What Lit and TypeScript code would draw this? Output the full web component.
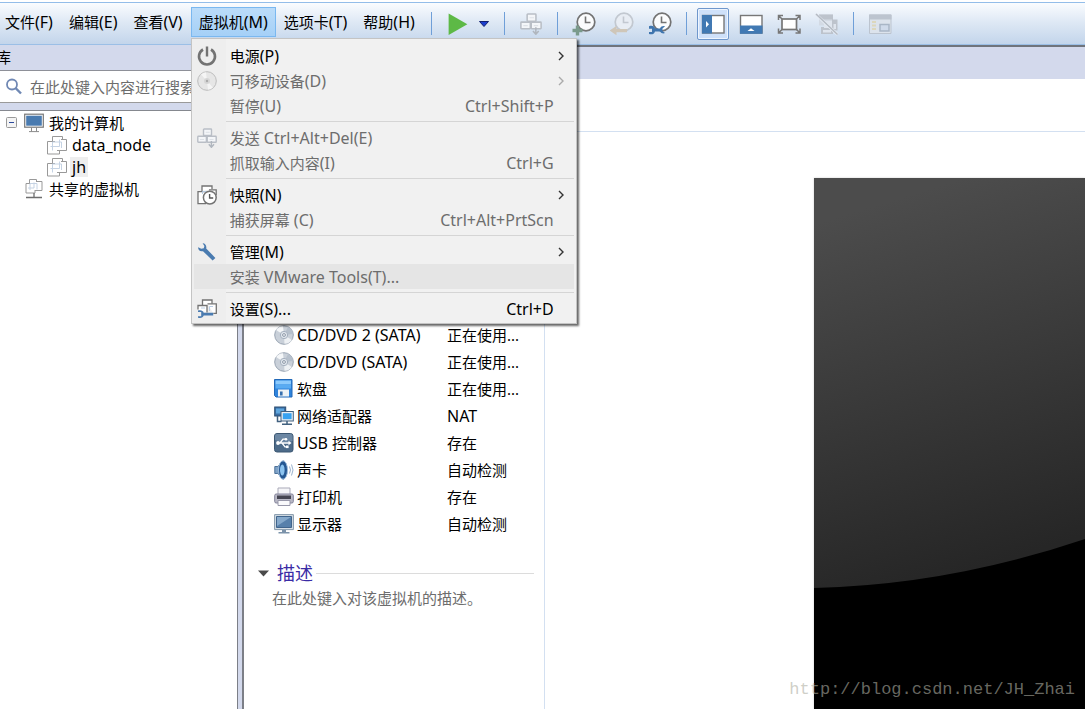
import { LitElement, html, css, svg, nothing, TemplateResult } from "lit";
import { customElement } from "lit/decorators.js";

const G = "#737373";

const art: Record<string, TemplateResult> = {
  power: svg`<path d="M6 3.5A8 8 0 1 0 14 3.5" fill="none" stroke="#737373" stroke-width="2.6"/><path d="M10 .5v10" stroke="#737373" stroke-width="2.4"/>`,
  discOff: svg`<circle cx="10" cy="10" r="9.3" fill="#e6e6e6" stroke="#bdbdbd"/><path d="M10 10 4 3.5A9 9 0 0 1 9 1.2zM10 10l6 6.5a9 9 0 0 1-5 2.3z" fill="#f5f5f5"/><circle cx="10" cy="10" r="3" fill="#d6d6d6"/><circle cx="10" cy="10" r="1.2" fill="#aaa"/>`,
  keys: svg`<g fill="#f4f6f9" stroke="#b9bec6" stroke-width="1.4"><rect x="6.5" y="1" width="8" height="6.5" rx=".6"/><rect x=".8" y="8.3" width="8.6" height="6" rx=".6"/><rect x="10.2" y="8.3" width="9" height="6" rx=".6"/></g><path d="M3 11.5h4M12.5 11.5h4M8.7 4.3h4" stroke="#dde1e7"/><path d="M14.4 13v6M11.8 16.3l2.6 3 2.6-3" fill="none" stroke="#b0b6be" stroke-width="1.4"/>`,
  snap: svg`<g fill="#fff" stroke="#737373" stroke-width="1.3"><path d="M5 6V1h10v3"/><path d="M8 6.7H1v12h8"/><path d="M12 4.8h7.2V10"/></g><path d="M5.5 9V6.5h4" stroke="#b9cde4" fill="none"/><circle cx="12.8" cy="12.6" r="6.4" fill="#fff" stroke="#737373" stroke-width="1.5"/><path d="M12.6 9v4h3.6" fill="none" stroke="#555" stroke-width="1.4"/>`,
  wrench: svg`<path d="M1.2 5.2C.8 7.600 2.700 10 6 9.200l9.600 9.200 2.800-2.500L9.200 6.600C9.900 3.500 8 1 5.600 1.200l1.800 2.800-.6 2.300-2.600.5z" fill="#4a7bb0"/>`,
  settings: svg`<g fill="#fff" stroke="#737373" stroke-width="1.3"><path d="M5.5 7V1h9.500v4"/><path d="M1 10.500V6.500h9v7"/><path d="M10.500 4.800h8.800v9.500h-3"/></g><path d="M4 9h4M12.500 12V7.500H16" stroke="#b9cde4" fill="none"/><path d="M1 11.500c3-.8 5.200.3 5.700 2.300h9.500v2.800H6.700c-.6 2-2.700 3-5.700 2.200v-1.500h3.200v-4.200H1z" fill="#4a7bb0"/>`,
  computer: svg`<rect x=".7" y="1.2" width="18.6" height="13" fill="#fff" stroke="#777" stroke-width="1.2"/><rect x="2.2" y="2.7" width="15.6" height="10" fill="#4a7bb0"/><path d="M7.5 14.5v4M12.5 14.5v4M5 18.6h10" stroke="#8a8a8a"/>`,
  vm: svg`<g fill="#fff" stroke="#999"><path d="M5.5 6.500V1.500h10V4.500"/><path d="M8 6.500H.5v12.500h12V15"/><path d="M14 4.500h5.500V15.500H10"/></g><path d="M5.500 15.500V7h9V13M3.500 11.500h9v-7" fill="none" stroke="#c5d3e4"/>`,
  shared: svg`<g fill="#fff" stroke="#999"><path d="M5.500 4.500V.5h7V3"/><path d="M7 4.500H2v9.500h9v-3"/><path d="M12 2.500h6v9h-7"/></g><path d="M6 11V4.500h7v6M4 9h6V3.500" fill="none" stroke="#c5d3e4"/><path d="M10 14v4M2 18.500h16" stroke="#6d6d6d" stroke-width="1.3"/>`,
  search: svg`<circle cx="8" cy="7.500" r="5" fill="none" stroke="#7088b4" stroke-width="1.800"/><path d="m11.500 11 5.500 5.500" stroke="#7088b4" stroke-width="2.400"/>`,
  play: svg`<path d="m1.500.5 17 9.800-17 9.700z" fill="#5db946"/>`,
  disc: svg`<circle cx="10" cy="10" r="9.300" fill="#c9d0d9" stroke="#9aa5b3"/><path d="M10 10 2 5A9 9 0 0 1 9 1.200z" fill="#f4f6f8"/><path d="m10 10 8 5a9 9 0 0 1-7.500 3.700z" fill="#eef1f4"/><path d="m10 10 4-8a9 9 0 0 1 5 7z" fill="#b6c0cc"/><circle cx="10" cy="10" r="3.700" fill="#dfe5ec" stroke="#a6b1bf"/><circle cx="10" cy="10" r="1.400" fill="#fff" stroke="#8995a5"/>`,
  floppy: svg`<path d="M.5.500h17.500v17.500H2L.5 16.500z" fill="#2f84dc" stroke="#2269b8"/><path d="M1.500 1.500h15.500v4h-15.500z" fill="#8ccafc"/><path d="M1.500 5.500h15.500v4h-15.500z" fill="#59abf2"/><path d="M4 10.500h11v7H4z" fill="#eef2f6"/><path d="M6 12.500h2.600v4H6z" fill="#376fae"/>`,
  network: svg`<rect x=".7" y="1" width="11" height="9" fill="#3a6ea5" stroke="#2d4f72"/><rect x="2" y="2.500" width="8" height="5" fill="#5fa6dd"/><rect x="7" y="5.500" width="12.300" height="9.500" fill="#e8eef3" stroke="#41617f"/><rect x="8.800" y="7.200" width="8.800" height="6" fill="#37a2f0"/><path d="M13 15v2.500M8 18.300h10M3.500 10v5.500h4" fill="none" stroke="#41617f" stroke-width="1.500"/>`,
  usb: svg`<rect x=".5" y=".5" width="18.500" height="18.500" rx="2.500" fill="#4d6b89" stroke="#3d5873"/><path d="M1 3a2 2 0 0 1 2-2h13.500a2 2 0 0 1 2 2v5Q10 11 1 7z" fill="#6c87a3"/><path d="M3 10h12M6 10l3-3.800h3M8 10l3 3.800h2" fill="none" stroke="#fff" stroke-width="1.300"/><path d="m14.500 7.800 3 2.200-3 2.200z" fill="#fff"/><circle cx="4" cy="10" r="1.900" fill="#fff"/><circle cx="12" cy="6.200" r="1.300" fill="#fff"/><path d="M12 12.500h2.600v2.600H12z" fill="#fff"/>`,
  sound: svg`<path d="M.8 6.500h3L9.500.8v18.400L3.800 13.500h-3z" fill="#7fa3c8" stroke="#4c7198"/><ellipse cx="9" cy="10" rx="4.500" ry="9.200" fill="#255893" stroke="#9dbbd9"/><ellipse cx="8.300" cy="10" rx="2.300" ry="5.500" fill="#8cc4f0"/><path d="M15.500 6.500q2 3.500 0 7M17.500 4.500q3 5.500 0 11" fill="none" stroke="#9ab3cf"/>`,
  printer: svg`<path d="M4 1h12v7H4z" fill="#f6f6f9" stroke="#a9a9b8"/><rect x=".7" y="7" width="18.600" height="9" rx="1.500" fill="#b9b9c6" stroke="#83839a"/><path d="M3 8.500h14v3.500H3z" fill="#454552"/><path d="M4 13.500h12v5H4z" fill="#fafafc" stroke="#9898aa"/>`,
  display: svg`<path d="M.6.6h18.800v15H.6z" fill="#d7dfe6" stroke="#8599ac"/><path d="M2.500 2.500h15v11h-15z" fill="#5780ab" stroke="#41658c"/><path d="M3 3h14L3 12z" fill="#86a9cb"/><path d="M8 16h4v2H8zM4.500 18h11v1.500h-11z" fill="#7c93aa"/>`,
};

const clock = (stroke: string, fill: string) =>
  svg`<circle cx="14" cy="10" r="8.800" fill=${fill} stroke=${stroke} stroke-width="1.700"/><path d="M13.500 4.500v6h5" fill="none" stroke=${stroke} stroke-width="1.600"/>`;

const tool: Record<string, TemplateResult> = {
  take: svg`${clock(G, "#fbfcfd")}<path d="M5.500 13.500v10M.5 18.500h10" stroke="#7a9a8c" stroke-width="3.400"/>`,
  revert: svg`${clock("#c2c8d0", "#e8edf4")}<path d="M-.5 18.500 6.500 14v3H17v3.200H6.500v3z" fill="#cfc6b8"/>`,
  manage: svg`${clock(G, "#fbfcfd")}<path d="M1 14.200c3.500-1 5.300.2 6 2.300h5c1-2 3-2.800 5-2.200l-2.500 2.200v2.600l2.500 2c-2 .8-4 0-5-1.700H7c-.8 2.500-3 3.500-6 2.500v-2h3v-3.200H1z" fill="#3f75ae"/>`,
  sidebar: svg`<rect x="1.500" y="3.500" width="21.500" height="17.500" fill="#fff" stroke="#777" stroke-width="1.400"/><path d="M1 3h10v18.500H1z" fill="#4179b3"/><path d="m5 9 3 3.300L5 15.500z" fill="#fff"/>`,
  thumbs: svg`<rect x="1.500" y="3.500" width="21.500" height="17.500" fill="#fff" stroke="#777" stroke-width="1.400"/><path d="M1 13.500h22.500v8.300H1z" fill="#4179b3"/><path d="m8.500 19 3.500-2.800 3.500 2.800z" fill="#fff"/>`,
  full: svg`<rect x="5" y="7" width="14.500" height="10.500" fill="#fff" stroke="#777" stroke-width="1.700"/><path d="M1.500 8V3.500H6M18.500 3.500H23V8M23 16.500V21h-4.500M6 21H1.500v-4.500M1.500 3.500 5 7M23 3.500 19.500 7M23 21l-3.500-3.500M1.500 21 5 17.500" fill="none" stroke="#777" stroke-width="1.500"/>`,
  unity: svg`<path d="M4 2.500h14v11H4z" fill="#d3dae4"/><path d="M4 2.500h14v5H4zM17 7.500h5.500v11H17zM6 15h12v7H6z" fill="#bdc3cc"/><path d="M9 9h8v7H9zM18.500 12h2.500v5h-2.500zM8 18h8v2.500H8z" fill="#dfe5ee"/><path d="m.5 2 22 20.500" stroke="#e6ecf4" stroke-width="3"/><path d="m1 2 21.500 20.500" stroke="#b4bac3" stroke-width="1.500"/>`,
  console: svg`<path d="M1.500 3h21.500v18.500H1.500z" fill="#dce3ec" stroke="#bcc4cf"/><path d="M1 2.500h22.500v5H1z" fill="#bcc4cf"/><path d="M4 10h4M4 13.500h4M4 17h4" stroke="#dcd7bc" stroke-width="2"/><path d="M12 12.500h9v6.500h-9z" fill="#cfdaea" stroke="#a9b6c6" stroke-width="1.500"/>`,
};

const icon = (name: string) => html`<svg class="icon" viewBox="0 0 20 20" aria-hidden="true">${art[name]}</svg>`;

/* Latin runs are set one size above the Chinese around them. */
const mixed = (text: string) =>
  text
    .split(/([\x20-\x7e]+)/)
    .filter(Boolean)
    .map((run) => (run.charCodeAt(0) < 128 ? html`<span class="latin">${run}</span>` : run));

interface Entry {
  label?: string;
  icon?: string;
  keys?: string;
  sub?: boolean;
  off?: boolean;
  hot?: boolean;
}

const entries: Entry[] = [
  { label: "电源(P)", icon: "power", sub: true },
  { label: "可移动设备(D)", icon: "discOff", sub: true, off: true },
  { label: "暂停(U)", keys: "Ctrl+Shift+P", off: true },
  {},
  { label: "发送 Ctrl+Alt+Del(E)", icon: "keys", off: true },
  { label: "抓取输入内容(I)", keys: "Ctrl+G", off: true },
  {},
  { label: "快照(N)", icon: "snap", sub: true },
  { label: "捕获屏幕 (C)", keys: "Ctrl+Alt+PrtScn", off: true },
  {},
  { label: "管理(M)", icon: "wrench", sub: true },
  { label: "安装 VMware Tools(T)...", off: true, hot: true },
  {},
  { label: "设置(S)...", icon: "settings", keys: "Ctrl+D" },
];

const base = css`
  :host {
    box-sizing: border-box;
    font: 15px/20px "Noto Sans", "Noto Sans CJK SC", sans-serif;
    color: #000;
  }
  * {
    box-sizing: border-box;
  }
  button,
  input {
    font: inherit;
    color: inherit;
    background: none;
    border: 0;
    padding: 0;
    margin: 0;
  }
  .latin {
    font-size: 16px;
  }
  .icon {
    width: 20px;
    height: 20px;
    flex: none;
    display: block;
  }
`;

@customElement("vm-menu")
class VmMenu extends LitElement {
  static styles = [
    base,
    css`
      :host {
        display: block;
        width: 386px;
        padding: 4px 2px 2px;
        border: 1px solid #c4c4c4;
        background: linear-gradient(90deg, #eeeeee 34px, #f1f1f1 34px);
        box-shadow: 2px 2px 2px rgba(0, 0, 0, 0.6);
      }
      .row {
        display: grid;
        grid-template-columns: 36px 1fr auto 20px;
        align-items: center;
        width: 100%;
        height: 25px;
        text-align: left;
        white-space: nowrap;
      }
      .row .icon {
        margin-left: 3px;
      }
      .off {
        color: #6d6d6d;
      }
      .hot {
        background: #e5e5e5;
      }
      .sep {
        height: 1px;
        margin: 3px 0 3px 32px;
        border: 0;
        background: #d5d5d5;
      }
      .arrow {
        width: 6px;
        height: 10px;
        margin-left: 4px;
        fill: none;
        stroke: #333;
        stroke-width: 1.4;
      }
      .off .arrow {
        stroke: #aaa;
      }
    `,
  ];

  render() {
    return html`${entries.map((e) =>
      e.label
        ? html`<button class="row ${e.off ? "off" : ""} ${e.hot ? "hot" : ""}" role="menuitem">
            <span>${e.icon ? icon(e.icon) : nothing}</span>
            <span>${mixed(e.label)}</span>
            <span>${e.keys ? mixed(e.keys) : nothing}</span>
            ${e.sub ? html`<svg class="arrow" viewBox="0 0 6 10"><path d="m1 1 4 4-4 4" /></svg>` : nothing}
          </button>`
        : html`<hr class="sep" />`
    )}`;
  }
}

@customElement("vm-toolbar")
class VmToolbar extends LitElement {
  static styles = [
    base,
    css`
      :host {
        display: flex;
        align-items: center;
        height: 43px;
        background: linear-gradient(#fafcfe, #dfe9f5 45%, #c3d5eb);
        border-top: 1px solid #93bde9;
        border-bottom: 1px solid #9bbfe6;
      }
      .menus {
        display: flex;
        flex: none;
        align-self: flex-start;
        margin: 4px 4px 0 -3px;
      }
      .holder {
        position: relative;
        z-index: 2;
      }
      .menu {
        height: 30px;
        padding: 0 8px;
        white-space: nowrap;
        border: 1px solid transparent;
        border-width: 1px 0;
      }
      .open {
        background: linear-gradient(#bbdcf9, #a5d0f7);
        border: 1px solid #7ab8f0;
        padding: 0 7px;
      }
      vm-menu {
        position: absolute;
        left: 0;
        top: 31px;
      }
      .tools {
        display: flex;
        align-items: center;
        gap: 6px;
      }
      .line {
        width: 1px;
        height: 23px;
        margin: 0 4px;
        background: #6f9fd8;
      }
      .split {
        display: flex;
      }
      .tool {
        display: grid;
        place-items: center;
        width: 32px;
        height: 32px;
      }
      .caret {
        width: 20px;
      }
      .big {
        width: 24px;
        height: 24px;
      }
      .mid {
        width: 22px;
        height: 22px;
      }
      .pressed {
        border: 1px solid #6f97cc;
        border-radius: 2px;
        background: #cfe1fa;
        box-shadow: inset 0 0 0 1px #eef5fe;
      }
    `,
  ];

  private tool(name: string, label: string, pressed = false) {
    return html`<button class="tool ${pressed ? "pressed" : ""}" aria-label=${label}>
      <svg class="big" viewBox="0 0 24 24">${tool[name]}</svg>
    </button>`;
  }

  private menu(label: string) {
    return html`<button class="menu">${mixed(label)}</button>`;
  }

  render() {
    const line = html`<span class="line"></span>`;
    return html`
      <nav class="menus">
        ${["文件(F)", "编辑(E)", "查看(V)"].map((m) => this.menu(m))}
        <div class="holder">
          <button class="menu open" aria-expanded="true">${mixed("虚拟机(M)")}</button>
          <vm-menu role="menu"></vm-menu>
        </div>
        ${["选项卡(T)", "帮助(H)"].map((m) => this.menu(m))}
      </nav>
      <div class="tools">
        ${line}
        <div class="split">
          <button class="tool" aria-label="电源">
            <svg class="mid" viewBox="0 0 20 20">${art.play}</svg>
          </button>
          <button class="tool caret" aria-label="电源选项">
            <svg width="10" height="6" viewBox="0 0 10 6"><path d="M.5.500h9L5 5.500z" fill="#1c3fd0" stroke="#12206e" /></svg>
          </button>
        </div>
        ${line}
        <button class="tool" aria-label="Ctrl+Alt+Del"><svg class="mid" viewBox="0 0 20 20">${art.keys}</svg></button>
        ${line} ${this.tool("take", "拍摄快照")} ${this.tool("revert", "恢复快照")} ${this.tool("manage", "管理快照")}
        ${line} ${this.tool("sidebar", "库", true)} ${this.tool("thumbs", "缩略图")} ${this.tool("full", "全屏")}
        ${this.tool("unity", "Unity")} ${line} ${this.tool("console", "控制台")}
      </div>
    `;
  }
}

@customElement("vm-library")
class VmLibrary extends LitElement {
  static styles = [
    base,
    css`
      :host {
        display: flex;
        flex-direction: column;
        background: #fff;
        overflow: hidden;
      }
      .title {
        height: 26px;
        margin: 0;
        padding-top: 2px;
        font: inherit;
        background: #d3d9ec;
        border-bottom: 1px solid #8e9098;
        text-indent: -4px;
      }
      .search {
        display: flex;
        align-items: center;
        gap: 6px;
        height: 32px;
        padding-left: 4px;
        border-bottom: 1px solid #9a9a9a;
      }
      .search input {
        flex: 1;
        min-width: 0;
        outline: 0;
      }
      .search input::placeholder {
        color: #6d6d6d;
        opacity: 1;
      }
      .gap {
        height: 8px;
        background: #d3d9ec;
        border-bottom: 1px solid #85888f;
      }
      ul {
        list-style: none;
        margin: 0;
        padding: 0;
      }
      .tree {
        padding-top: 1px;
      }
      .node {
        display: flex;
        align-items: center;
        gap: 3px;
        height: 22px;
        padding-left: 24px;
      }
      .root {
        padding-left: 6px;
      }
      .child {
        padding-left: 47px;
      }
      .toggle {
        width: 12px;
        height: 12px;
        margin-right: 3px;
      }
      .toggle svg {
        display: block;
      }
      .name {
        padding: 0 2px;
      }
      .chosen {
        background: #eeeeee;
      }
    `,
  ];

  render() {
    return html`
      <h2 class="title">库</h2>
      <label class="search">${icon("search")}<input type="search" aria-label="搜索" placeholder="在此处键入内容进行搜索" /></label>
      <div class="gap"></div>
      <ul class="tree">
        <li>
          <div class="node root">
            <button class="toggle" aria-label="折叠">
              <svg width="12" height="12"><rect x=".5" y=".5" width="10" height="10" rx="1" fill="#f4f4f4" stroke="#999" /><path d="M3 5.500h5" stroke="#2c4a9c" /></svg>
            </button>
            ${icon("computer")}<span class="name">我的计算机</span>
          </div>
          <ul>
            <li class="node child">${icon("vm")}<span class="name">${mixed("data_node")}</span></li>
            <li class="node child">${icon("vm")}<span class="name chosen">${mixed("jh")}</span></li>
          </ul>
        </li>
        <li class="node">${icon("shared")}<span class="name">共享的虚拟机</span></li>
      </ul>
    `;
  }
}

const devices = [
  ["disc", "CD/DVD 2 (SATA)", "正在使用..."],
  ["disc", "CD/DVD (SATA)", "正在使用..."],
  ["floppy", "软盘", "正在使用..."],
  ["network", "网络适配器", "NAT"],
  ["usb", "USB 控制器", "存在"],
  ["sound", "声卡", "自动检测"],
  ["printer", "打印机", "存在"],
  ["display", "显示器", "自动检测"],
];

@customElement("vm-summary")
class VmSummary extends LitElement {
  static styles = [
    base,
    css`
      :host {
        display: flex;
        flex-direction: column;
        background: #fff;
        min-width: 0;
      }
      .tabs {
        height: 34px;
        background: #d3d9ec;
        border-top: 2px solid #6f747c;
      }
      .head {
        height: 53px;
        border-bottom: 1px solid #d3e0f1;
      }
      .body {
        flex: 1;
        display: grid;
        grid-template-columns: 301px 1fr;
      }
      .info {
        padding: 189px 10px 0 14px;
        border-right: 1px solid #d3e0f1;
      }
      table {
        border-collapse: collapse;
        margin-left: 16px;
      }
      td {
        height: 27px;
        padding: 0;
        white-space: nowrap;
      }
      .device {
        display: flex;
        align-items: center;
        gap: 3px;
        width: 173px;
      }
      .section {
        display: flex;
        align-items: center;
        gap: 3px;
        margin: 23px 0 0;
        font-size: 18px;
        line-height: 26px;
        font-weight: 400;
        color: #3a2ba5;
      }
      .section svg {
        margin-right: 5px;
      }
      .section::after {
        content: "";
        flex: 1;
        height: 1px;
        background: #dcdcdc;
      }
      .note {
        display: block;
        width: 100%;
        height: 24px;
        padding-left: 14px;
        outline: 0;
      }
      .note::placeholder {
        color: #6d6d6d;
        opacity: 1;
      }
      .screen {
        position: relative;
        margin: 46px 0 0 269px;
        background: #000;
        box-shadow: 0 0 2px rgba(0, 0, 0, 0.2);
      }
      .glare {
        display: block;
        width: 100%;
        height: 411px;
      }
      .mark {
        position: absolute;
        right: 10px;
        bottom: 8px;
        font: 17px/22px "Liberation Mono", monospace;
        color: rgba(175, 175, 163, 0.6);
        white-space: nowrap;
      }
    `,
  ];

  render() {
    return html`
      <div class="tabs"></div>
      <div class="head"></div>
      <div class="body">
        <section class="info">
          <table>
            ${devices.map(
              ([glyph, name, state]) =>
                html`<tr>
                  <td><div class="device">${icon(glyph)}<span>${mixed(name)}</span></div></td>
                  <td>${state === "NAT" ? mixed(state) : state}</td>
                </tr>`
            )}
          </table>
          <h3 class="section">
            <svg width="11" height="7"><path d="M0 .5h11L5.500 6.500z" fill="#4a4a4a" /></svg>
            <span>描述</span>
          </h3>
          <input class="note" aria-label="描述" placeholder="在此处键入对该虚拟机的描述。" />
        </section>
        <div class="screen">
          <svg class="glare" viewBox="0 0 271 411" preserveAspectRatio="none">
            <defs>
              <linearGradient id="shade" gradientUnits="userSpaceOnUse" x1="20" y1="40" x2="130" y2="400">
                <stop offset="0" stop-color="#4c4c4c" />
                <stop offset="1" stop-color="#262626" />
              </linearGradient>
            </defs>
            <path d="M0 0h271v361Q135 407 0 410z" fill="url(#shade)" />
          </svg>
          <span class="mark">http://blog.csdn.net/JH_Zhai</span>
        </div>
      </div>
    `;
  }
}

@customElement("app-root")
class AppRoot extends LitElement {
  static styles = css`
    :host {
      display: flex;
      flex-direction: column;
      min-height: 100vh;
      overflow: hidden;
      background: #fff;
    }
    .top {
      margin-top: 2px;
      position: relative;
      z-index: 1;
    }
    .work {
      flex: 1;
      display: grid;
      grid-template-columns: 237px 7px 1fr;
    }
    .splitter {
      background: #d3d9ec;
      border: solid #7c7f87;
      border-width: 0 2px 0 1px;
    }
  `;

  render() {
    return html`
      <vm-toolbar class="top"></vm-toolbar>
      <main class="work">
        <vm-library></vm-library>
        <div class="splitter"></div>
        <vm-summary></vm-summary>
      </main>
    `;
  }
}
